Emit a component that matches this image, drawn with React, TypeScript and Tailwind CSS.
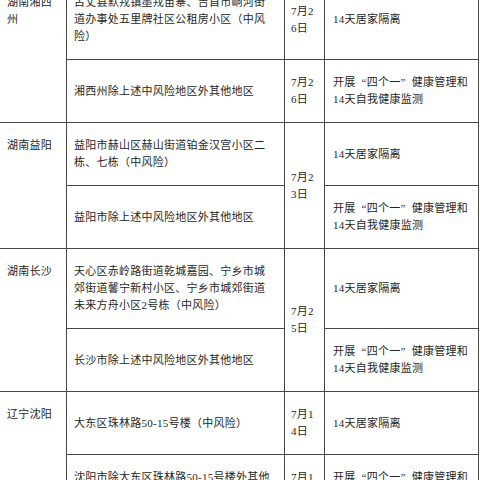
import type { ReactNode } from "react";

type Lines = ReactNode[];

// Full-width quote marks, the way a Song-style CJK font sets them
const openQuote = <span className="inline-block w-[11.25px] text-right">“</span>;
const closeQuote = <span className="inline-block w-[11.25px] text-left">”</span>;

const homeIsolation: Lines = ["14天居家隔离"];
const healthWatch: Lines = [
  <>
    开展{openQuote}四个一{closeQuote}健康管理和
  </>,
  "14天自我健康监测",
];

function Text({ lines }: { lines: Lines }) {
  return (
    <span>
      {lines.map((line, i) => (
        <span key={i} className="block whitespace-nowrap">
          {line}
        </span>
      ))}
    </span>
  );
}

function RegionCell({ lines }: { lines: Lines }) {
  return (
    <div className="row-span-2 bg-white pl-[7px] pt-[14px]">
      <Text lines={lines} />
    </div>
  );
}

function AreaCell({ lines }: { lines: Lines }) {
  return (
    <div className="flex items-center bg-white py-[14px] pl-[7px]">
      <Text lines={lines} />
    </div>
  );
}

function DateCell({ lines, span }: { lines: Lines; span?: boolean }) {
  return (
    <div
      className={
        span
          ? "row-span-2 flex items-center bg-white py-[14px] pl-[6px]"
          : "flex items-center bg-white py-[14px] pl-[6px]"
      }
    >
      <Text lines={lines} />
    </div>
  );
}

function MeasureCell({ lines }: { lines: Lines }) {
  return (
    <div className="flex items-center bg-white py-[14px] pl-[8px]">
      <Text lines={lines} />
    </div>
  );
}

export default function App() {
  return (
    <div className="h-[480px] w-[480px] overflow-hidden bg-white">
      <div
        className="-mt-[20px] grid w-[479px] grid-cols-[66px_217px_39px_153px] gap-px bg-[#474747] pb-px pr-px text-[11px] leading-[17px] tracking-[0.25px] text-[#262626]"
        style={{ fontFamily: '"Liberation Serif", "Noto Sans CJK SC", serif' }}
      >
        {/* 湖南湘西 */}
        <RegionCell lines={["湖南湘西", "州"]} />
        <AreaCell
          lines={["古丈县默戎镇墨戎苗寨、吉首市峒河街", "道办事处五里牌社区公租房小区（中风", "险）"]}
        />
        <DateCell lines={["7月2", "6日"]} />
        <MeasureCell lines={homeIsolation} />
        <AreaCell lines={["湘西州除上述中风险地区外其他地区"]} />
        <DateCell lines={["7月2", "6日"]} />
        <MeasureCell lines={healthWatch} />

        {/* 湖南益阳 */}
        <RegionCell lines={["湖南益阳"]} />
        <AreaCell lines={["益阳市赫山区赫山街道铂金汉宫小区二", "栋、七栋（中风险）"]} />
        <DateCell span lines={["7月2", "3日"]} />
        <MeasureCell lines={homeIsolation} />
        <AreaCell lines={["益阳市除上述中风险地区外其他地区"]} />
        <MeasureCell lines={healthWatch} />

        {/* 湖南长沙 */}
        <RegionCell lines={["湖南长沙"]} />
        <AreaCell
          lines={["天心区赤岭路街道乾城嘉园、宁乡市城", "郊街道馨宁新村小区、宁乡市城郊街道", "未来方舟小区2号栋（中风险）"]}
        />
        <DateCell span lines={["7月2", "5日"]} />
        <MeasureCell lines={homeIsolation} />
        <AreaCell lines={["长沙市除上述中风险地区外其他地区"]} />
        <MeasureCell lines={healthWatch} />

        {/* 辽宁沈阳 */}
        <RegionCell lines={["辽宁沈阳"]} />
        <AreaCell lines={["大东区珠林路50-15号楼（中风险）"]} />
        <DateCell lines={["7月1", "4日"]} />
        <MeasureCell lines={homeIsolation} />
        <AreaCell lines={["沈阳市除大东区珠林路50-15号楼外其他", "地区"]} />
        <DateCell lines={["7月1", "4日"]} />
        <MeasureCell lines={healthWatch} />
      </div>
    </div>
  );
}
